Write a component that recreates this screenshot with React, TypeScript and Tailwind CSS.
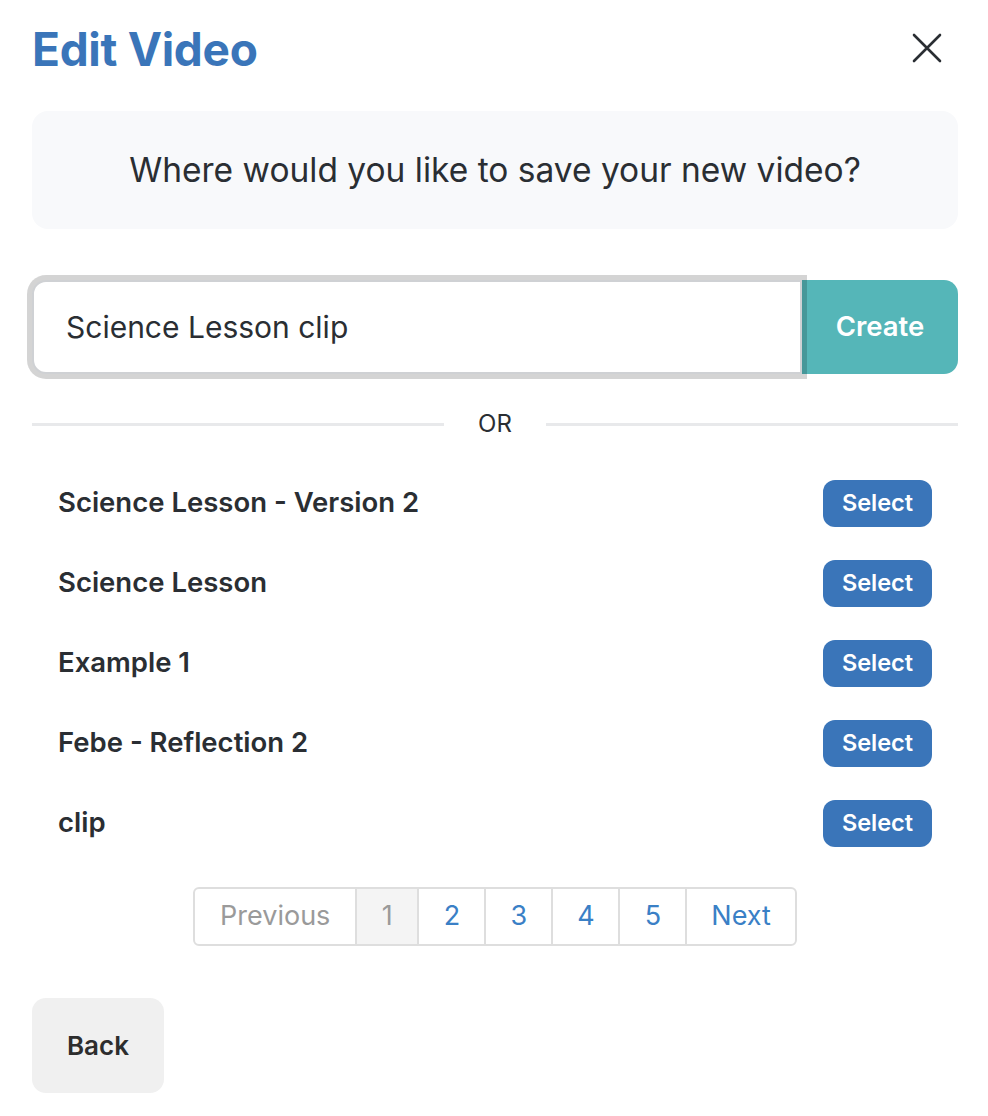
const items = [
  "Science Lesson - Version 2",
  "Science Lesson",
  "Example 1",
  "Febe - Reflection 2",
  "clip",
];

const pages = ["1", "2", "3", "4", "5"];

export default function App() {
  return (
    <div
      className="w-[988px] min-h-[1116px] bg-white pl-8 pr-[30px] text-[#2a2e33]"
      style={{ fontFamily: "Inter, 'Noto Sans', sans-serif" }}
    >
      {/* Header */}
      <div className="flex items-center justify-between h-[98px]">
        <h1 className="text-[46px] font-bold text-[#3a75b9] tracking-[-0.3px] leading-none">
          Edit Video
        </h1>
        <button className="mr-[16px] mt-[-2px] text-[#2a2e33]" aria-label="Close">
          <svg width="30" height="30" viewBox="0 0 30 30" fill="none">
            <path
              d="M2 2 L28 28 M28 2 L2 28"
              stroke="currentColor"
              strokeWidth="2.6"
              strokeLinecap="round"
            />
          </svg>
        </button>
      </div>

      {/* Prompt */}
      <div className="mt-[13px] h-[118px] rounded-2xl bg-[#f8f9fb] flex items-center justify-center">
        <p className="text-[33.5px]">Where would you like to save your new video?</p>
      </div>

      {/* New video name */}
      <div className="mt-[51px] flex h-[94px]">
        <div className="relative z-10 flex-1 flex items-center rounded-l-[14px] border-2 border-[#cfd1d4] bg-white pl-[32px] shadow-[0_0_0_5px_rgba(0,0,0,0.17)]">
          <span className="text-[30px]">Science Lesson clip</span>
        </div>
        <button className="w-[156px] rounded-r-[14px] bg-[#55b6b8] text-white text-[27.5px] font-semibold">
          Create
        </button>
      </div>

      {/* OR divider */}
      <div className="mt-[30px] flex items-center h-[40px]">
        <div className="flex-1 h-[3px] bg-[#e8e9eb]" />
        <span className="px-[34px] text-[24px]">OR</span>
        <div className="flex-1 h-[3px] bg-[#e8e9eb]" />
      </div>

      {/* Existing videos */}
      <div className="mt-[19px]">
        {items.map((item) => (
          <div key={item} className="flex items-center justify-between h-[80px] px-[26px]">
            <span className="text-[27.5px] font-semibold">{item}</span>
            <button className="h-[47px] w-[109px] rounded-xl bg-[#3a75b9] text-white text-[23.5px] font-semibold">
              Select
            </button>
          </div>
        ))}
      </div>

      {/* Pagination */}
      <div className="mt-[24px] flex justify-center">
        <div className="flex h-[59px] rounded-md border-2 border-[#dedede] overflow-hidden text-[27px]">
          <span className="flex items-center px-[25px] text-[#9a9a9a]">Previous</span>
          {pages.map((p) => (
            <span
              key={p}
              className={
                p === "1"
                  ? "flex items-center justify-center w-[62px] border-l-2 border-[#dedede] bg-[#f4f4f4] text-[#9a9a9a]"
                  : "flex items-center justify-center w-[67px] border-l-2 border-[#dedede] text-[#3a80c6]"
              }
            >
              {p}
            </span>
          ))}
          <span className="flex items-center px-[24px] border-l-2 border-[#dedede] text-[#3a80c6]">
            Next
          </span>
        </div>
      </div>

      {/* Back */}
      <div className="mt-[52px]">
        <button className="h-[95px] w-[132px] rounded-[14px] bg-[#f0f0f0] text-[26px] font-semibold text-[#2d2d2d]">
          Back
        </button>
      </div>
    </div>
  );
}
